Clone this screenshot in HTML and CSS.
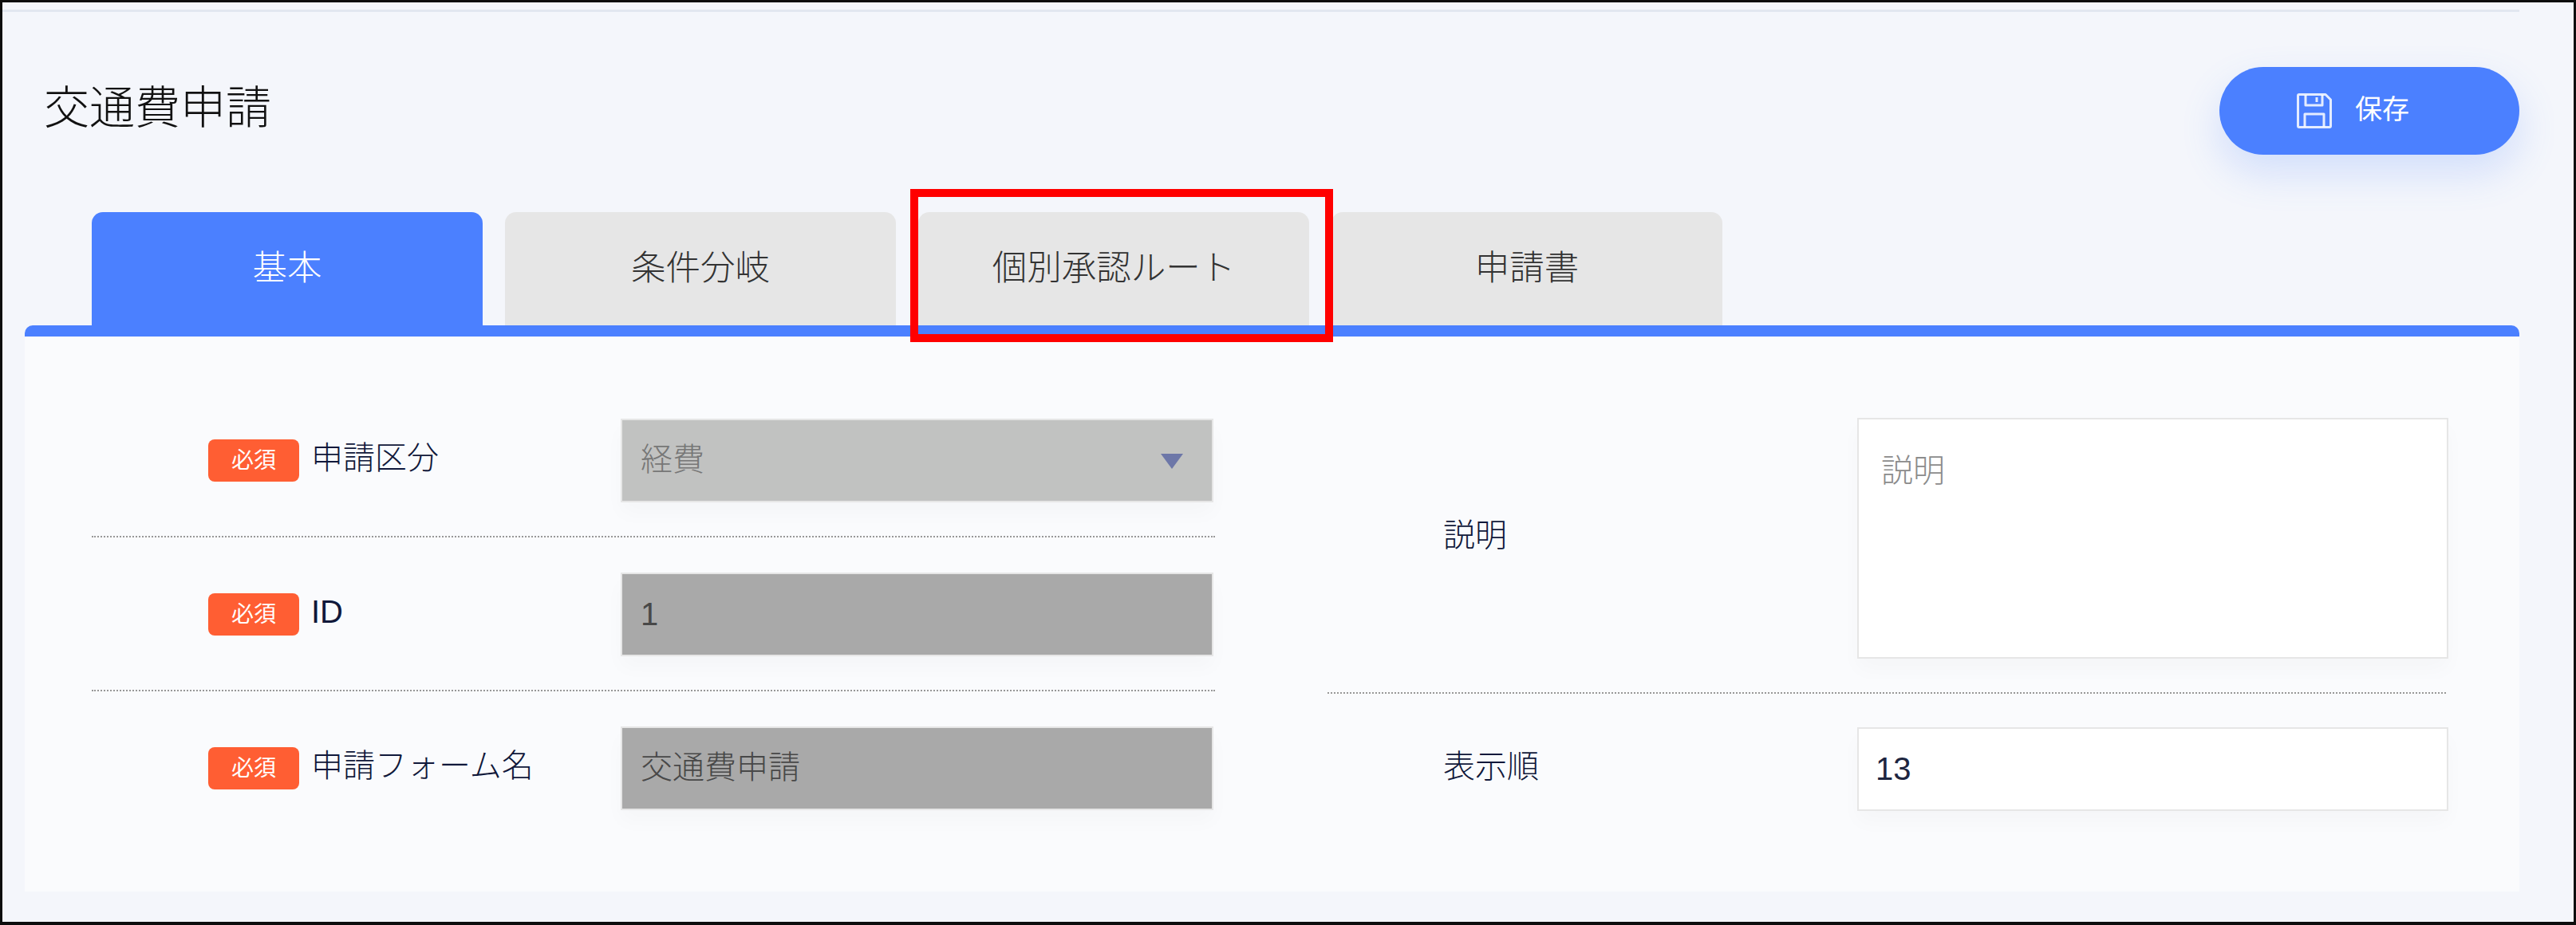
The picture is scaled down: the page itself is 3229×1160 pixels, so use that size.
FILE: index.html
```html
<!DOCTYPE html>
<html lang="ja">
<head>
    <meta charset="UTF-8">
    <meta name="viewport" content="width=device-width, initial-scale=1.0">
    <title>交通費申請</title>
    <link rel="stylesheet" href="styles.css">
</head>
<body>
    <div class="frame">
        <div class="top-line"></div>
        <div class="header">
            <h1>交通費申請</h1>
            <button class="save-btn" type="button">
                <svg class="save-icon" viewBox="0 0 44 44" fill="none" stroke="#fff" stroke-width="3" stroke-linejoin="round" stroke-opacity="0.85">
                    <path d="M3 1.5H36L42.5 8V41Q42.5 42.5 41 42.5H3Q1.5 42.5 1.5 41V3Q1.5 1.5 3 1.5Z"/>
                    <path d="M11 2V15H32V2"/>
                    <path d="M25 5V11"/>
                    <path d="M10 42V26H34V42"/>
                </svg>
                <span class="save-text">保存</span>
            </button>
        </div>

        <div class="tabs">
            <div class="tab active">基本</div>
            <div class="tab">条件分岐</div>
            <div class="tab">個別承認ルート<div class="highlight"></div></div>
            <div class="tab">申請書</div>
        </div>

        <div class="panel">
            <div class="column">
                <div class="row">
                    <div class="label"><span class="required">必須</span><span class="label-text">申請区分</span></div>
                    <div class="select-wrap">
                        <select class="field select-field" disabled>
                            <option>経費</option>
                        </select>
                    </div>
                </div>
                <div class="row">
                    <div class="label"><span class="required">必須</span><span class="label-text">ID</span></div>
                    <input class="field locked" type="text" value="1" disabled>
                </div>
                <div class="row last">
                    <div class="label"><span class="required">必須</span><span class="label-text">申請フォーム名</span></div>
                    <input class="field locked name-field" type="text" value="交通費申請" disabled>
                </div>
            </div>
            <div class="column right">
                <div class="row">
                    <div class="label"><span class="label-text">説明</span></div>
                    <textarea class="field memo" placeholder="説明"></textarea>
                </div>
                <div class="row last">
                    <div class="label"><span class="label-text">表示順</span></div>
                    <input class="field" type="text" value="13">
                </div>
            </div>
        </div>
    </div>
</body>
</html>
```

FILE: styles.css
```css
* {
    box-sizing: border-box;
}
body {
    margin: 0;
    font-family: "Liberation Sans", "Noto Sans CJK JP", sans-serif;
    font-weight: 300;
    background-color: #f4f6fb;
}
.frame {
    height: 1160px;
    border: 3px solid #0d0d0d;
    border-bottom-width: 4px;
    padding: 9px 68px 0 28px;
}
.top-line {
    height: 3px;
    margin-left: -28px;
    background-color: #e2e7f0;
}
.header {
    display: flex;
    justify-content: space-between;
    align-items: flex-start;
    height: 251px;
    padding-left: 24px;
}
h1 {
    margin: 84px 0 0;
    font-size: 57px;
    line-height: 72px;
    font-weight: 300;
    color: #111;
}
.save-btn {
    display: flex;
    align-items: center;
    width: 376px;
    height: 110px;
    margin-top: 69px;
    padding: 0 0 0 97px;
    border: 0;
    border-radius: 55px;
    background-color: #4b80ff;
    box-shadow: 0 22px 50px rgba(75, 128, 255, 0.2);
    color: #fff;
    font-family: inherit;
    font-size: 34px;
    font-weight: 400;
}
.save-icon {
    width: 44px;
    height: 44px;
    margin-right: 29px;
}
.save-text {
    padding-bottom: 10px;
}
.tabs {
    display: flex;
    gap: 28px;
    height: 142px;
    margin-left: 84px;
}
.tab {
    position: relative;
    width: 490px;
    padding-top: 40px;
    border-radius: 14px 14px 0 0;
    background-color: #e6e6e6;
    color: #333;
    font-size: 43.5px;
    line-height: 60px;
    text-align: center;
}
.tab.active {
    background-color: #4b80ff;
    color: #fff;
}
.highlight {
    position: absolute;
    top: -29px;
    left: -10px;
    right: -30px;
    bottom: -21px;
    z-index: 2;
    border: 10px solid #ff0000;
}
.panel {
    display: flex;
    gap: 141px;
    height: 710px;
    padding: 59px 0 0 84px;
    border-top: 14px solid #4b80ff;
    border-radius: 10px 10px 0 0;
    background-color: #fafbfd;
}
.column {
    width: 1408px;
}
.column.right {
    width: 1402px;
    margin-top: -1px;
}
.row {
    display: flex;
    align-items: center;
    padding: 44px 0 42px;
    border-bottom: 2px dotted #989898;
}
.row.last {
    border-bottom: 0;
}
.column.right .row.last {
    padding-top: 42px;
}
.label {
    display: flex;
    flex-shrink: 0;
    align-items: center;
    gap: 15px;
    width: 663px;
    padding-left: 146px;
    color: #10183a;
    font-size: 40px;
    line-height: 56px;
}
.label-text {
    padding-bottom: 8px;
}
.required {
    width: 114px;
    height: 53px;
    border-radius: 8px;
    background-color: #ff5e33;
    color: #fff;
    font-size: 28px;
    font-weight: 400;
    line-height: 53px;
    text-align: center;
}
.field {
    display: block;
    flex-shrink: 0;
    width: 743px;
    height: 105px;
    padding: 0 23px;
    border: 2px solid #e6e6e6;
    border-radius: 0;
    background-color: #fff;
    box-shadow: 0 14px 24px rgba(0, 0, 0, 0.025);
    color: #1d2540;
    font-family: inherit;
    font-size: 40px;
    font-weight: 300;
}
.locked {
    background-color: #a9a9a9;
    color: #484848;
}
.name-field {
    padding-bottom: 10px;
}
.select-wrap {
    position: relative;
}
.select-wrap::after {
    content: "";
    position: absolute;
    top: 44px;
    right: 38px;
    border-style: solid;
    border-width: 19px 14px 0;
    border-color: #6d77a8 transparent transparent;
}
.select-field {
    appearance: none;
    padding-bottom: 4px;
    background-color: #c1c2c1;
    color: #777;
    opacity: 1;
}
.column.right .label {
    width: 664px;
    padding-left: 145px;
}
.column.right .field {
    width: 741px;
    padding-left: 21px;
}
.column.right .memo {
    height: 302px;
    padding: 36px 28px 0;
    resize: none;
    line-height: 56px;
}
.memo::placeholder {
    color: #8c8c8c;
}
```
